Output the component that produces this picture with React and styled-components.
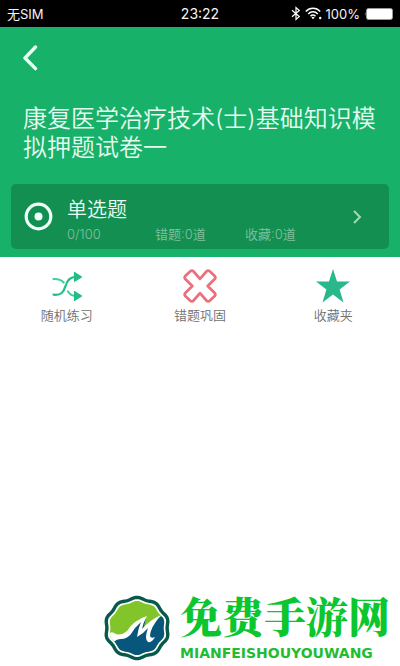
import React from "react";
import styled, { createGlobalStyle } from "styled-components";

const GlobalStyle = createGlobalStyle`
  * { box-sizing: border-box; }
  body {
    margin: 0;
    background: #fff;
    font-family: Inter, "Noto Sans CJK SC", sans-serif;
  }
  button { font: inherit; border: 0; padding: 0; background: none; cursor: pointer; }
  h1, p { margin: 0; }
  svg { display: block; flex: none; }
`;

const Screen = styled.div`
  min-height: 100vh;
  display: flex;
  flex-direction: column;
`;

const StatusBar = styled.div`
  display: grid;
  grid-template-columns: 1fr auto 1fr;
  align-items: center;
  height: 27px;
  padding: 0 7px;
  background: #000;
  color: #f4f4f4;
  font-size: 13px;
  line-height: 20px;
`;

const Clock = styled.time`
  font-size: 14px;
`;

const StatusIcons = styled.div`
  display: flex;
  align-items: center;
  justify-content: flex-end;
  gap: 4px;
`;

const Header = styled.header`
  background: #17b169;
  padding: 12px 11px 8px;
`;

const BackButton = styled.button`
  display: flex;
  align-items: center;
  justify-content: center;
  width: 38px;
  height: 38px;
  color: #e8fff3;
`;

const Title = styled.h1`
  padding: 27px 0 0 12px;
  color: #e6faf0;
  font-size: 24px;
  font-weight: 350;
  line-height: 29px;
`;

const QuestionCard = styled.button`
  display: flex;
  align-items: center;
  width: 100%;
  height: 65px;
  margin-top: 22px;
  && { padding: 0 27px 0 13px; }
  border-radius: 5px;
  && { background: #138f51; }
  text-align: left;
`;

const CardBody = styled.span`
  flex: 1;
  display: flex;
  flex-direction: column;
  padding: 6px 0 0 14px;
`;

const CardTitle = styled.span`
  color: #e9fbf2;
  font-size: 20px;
  font-weight: 350;
  line-height: 28px;
`;

const Stats = styled.span`
  display: grid;
  grid-template-columns: 88px 90px 1fr;
  color: #82c2a0;
  font-size: 13px;
  font-weight: 350;
  line-height: 20px;
`;

const Actions = styled.nav`
  display: grid;
  grid-template-columns: repeat(3, 1fr);
  padding-top: 12px;
`;

const Action = styled.button`
  display: flex;
  flex-direction: column;
  align-items: center;
  gap: 2px;
  color: #707070;
  && { font-size: 13px; font-weight: 350; line-height: 20px; }
`;

const Brand = styled.footer`
  display: flex;
  align-items: flex-end;
  justify-content: flex-end;
  gap: 9px;
  margin-top: auto;
  padding: 0 10px 5px 0;
`;

const BrandText = styled.div`
  display: flex;
  flex-direction: column;
`;

const BrandName = styled.p`
  color: #0bc62f;
  font-family: "Noto Serif CJK SC", "Noto Sans CJK SC", serif;
  font-size: 42px;
  font-weight: 900;
  line-height: 60px;
`;

const BrandLatin = styled.p`
  color: #1fbd2f;
  font-family: "DejaVu Sans", sans-serif;
  font-size: 14px;
  font-weight: 700;
  line-height: 16px;
`;

const BluetoothIcon = () => (
  <svg width="10" height="15" viewBox="0 0 10 15" fill="none" stroke="#fff" strokeWidth="1.2">
    <path d="M1 4.2 8.3 10.5 5 13.5V1.5l3.3 3L1 10.8" />
  </svg>
);

const WifiIcon = () => (
  <svg width="17" height="13" viewBox="0 0 17 13" fill="none" stroke="#fff" strokeWidth="1.5">
    <path d="M.8 4.4c4-4.3 10.4-4.3 14.4 0M3.2 6.9c2.7-2.8 6.9-2.8 9.6 0M5.5 9.2c1.5-1.5 3.5-1.5 5 0" />
    <path d="m6.4 10.4 1.6 1.8 1.6-1.8c-1-.8-2.2-.8-3.2 0z" fill="#fff" stroke="none" />
    <circle cx="15.2" cy="11" r="1.2" fill="#fff" stroke="none" />
  </svg>
);

const BatteryIcon = () => (
  <svg width="29" height="12" viewBox="0 0 29 12">
    <path d="M1.5 4Q0 6 1.5 8z" fill="#aaa" />
    <rect x="2.5" y=".5" width="26" height="11" rx="2" fill="#fff" stroke="#999" />
  </svg>
);

const BackIcon = () => (
  <svg width="16" height="26" viewBox="0 0 16 26" fill="none" stroke="currentColor" strokeWidth="3.4" strokeLinecap="round" strokeLinejoin="round">
    <path d="M13.5 2 3 13l10.5 10.6" />
  </svg>
);

const RadioIcon = () => (
  <svg width="29" height="29" viewBox="0 0 29 29">
    <circle cx="14.5" cy="14.5" r="12.3" fill="none" stroke="#f0fff7" strokeWidth="3.2" />
    <circle cx="14.5" cy="14.5" r="4" fill="#f0fff7" />
  </svg>
);

const ForwardIcon = () => (
  <svg width="10" height="14" viewBox="0 0 10 14" fill="none" stroke="#a5d6bc" strokeWidth="2">
    <path d="m2 1 6 6-6 6" />
  </svg>
);

const ShuffleIcon = () => (
  <svg width="34" height="34" viewBox="0 0 34 34" fill="none" strokeWidth="2.2" strokeLinecap="round">
    <path d="M3.5 10C9 9.8 11.5 11 13.7 13.5M18 22.5c2 3 4.2 4.4 7.5 4.5" stroke="#42cf9f" />
    <path d="M3.5 25.7c8 .8 10-2.5 12-8.5C17.5 10.7 20 8 26.500 7.800" stroke="#20bf86" />
    <path d="m24.500 3.500 7 4.400-7 4.400zM24.500 22.500l7 4.500-7 4.500z" fill="#20bf86" stroke="#20bf86" strokeWidth="1.2" strokeLinejoin="round" />
  </svg>
);

const CrossIcon = () => (
  <svg width="34" height="34" viewBox="0 0 34 34" fill="none" stroke="#eb6f7c" strokeWidth="2.7" strokeLinejoin="round">
    <path d="M7.3 2.3Q9 .9 10.6 2.5L17 9.8 23.4 2.5Q25 .9 26.7 2.3L31.7 7Q33 8.5 31.7 10L24.7 17 31.7 24Q33 25.5 31.7 27L26.7 31.7Q25 33.1 23.4 31.5L17 24.2 10.6 31.5Q9 33.1 7.3 31.7L2.3 27Q1 25.5 2.3 24L9.3 17 2.3 10Q1 8.5 2.3 7z" />
  </svg>
);

const StarIcon = () => (
  <svg width="34" height="34" viewBox="0 0 34 34" fill="#29b78c">
    <path d="m17 0 4 12.6h13l-10.4 8L27.5 33.500 17 25.600 6.500 33.500l3.900-12.900L0 12.600h13z" />
  </svg>
);

// Outline of a ten-lobed badge around the centre of the logo.
const lobes = (radius, depth) => {
  const points = Array.from({ length: 120 }, (_, i) => {
    const angle = (i / 120) * Math.PI * 2;
    const r = radius + depth * Math.cos(10 * angle);
    return `${(34 + r * Math.sin(angle)).toFixed(2)} ${(33 - r * 0.96 * Math.cos(angle)).toFixed(2)}`;
  });
  return `M${points.join("L")}z`;
};

const BrandLogo = () => (
  <svg width="68" height="66" viewBox="0 0 68 66">
    <defs>
      <clipPath id="badge">
        <path d={lobes(27.4, 0.8)} />
      </clipPath>
    </defs>
    <path d={lobes(31, 0.9)} fill="#fff" stroke="#07594b" strokeWidth="3.4" strokeLinejoin="round" />
    <g clipPath="url(#badge)">
      <path d="M0 0h68v66H0z" fill="#82c52b" />
      <path d="M4 47Q14 42 24 40 32 27 43 23L40 36 57 22 68 18V66H0z" fill="#08567c" />
      <path d="M6 39Q8 36 11 38 17 42 24 36 31 25 44 21 40 28 39 34 47 25 58 20 47 33 47 41 48 44 52 42 49 48 45 47 41 44 45 33 41 38 34 42 35 34 38 27 32 32 28 39 24 44 18 44 13 44 10 48 9 45 6 44z" fill="#fff" />
    </g>
  </svg>
);

export default function App() {
  return (
    <>
      <GlobalStyle />
      <Screen>
        <StatusBar>
          <span>无SIM</span>
          <Clock>23:22</Clock>
          <StatusIcons>
            <BluetoothIcon />
            <WifiIcon />
            <span>100%</span>
            <BatteryIcon />
          </StatusIcons>
        </StatusBar>
        <Header>
          <BackButton aria-label="返回"><BackIcon /></BackButton>
          <Title>康复医学治疗技术(士)基础知识模拟押题试卷一</Title>
          <QuestionCard>
            <RadioIcon />
            <CardBody>
              <CardTitle>单选题</CardTitle>
              <Stats>
                <span>0/100</span>
                <span>错题:0道</span>
                <span>收藏:0道</span>
              </Stats>
            </CardBody>
            <ForwardIcon />
          </QuestionCard>
        </Header>
        <Actions>
          <Action><ShuffleIcon />随机练习</Action>
          <Action><CrossIcon />错题巩固</Action>
          <Action><StarIcon />收藏夹</Action>
        </Actions>
        <Brand>
          <BrandLogo />
          <BrandText>
            <BrandName>免费手游网</BrandName>
            <BrandLatin>MIANFEISHOUYOUWANG</BrandLatin>
          </BrandText>
        </Brand>
      </Screen>
    </>
  );
}
